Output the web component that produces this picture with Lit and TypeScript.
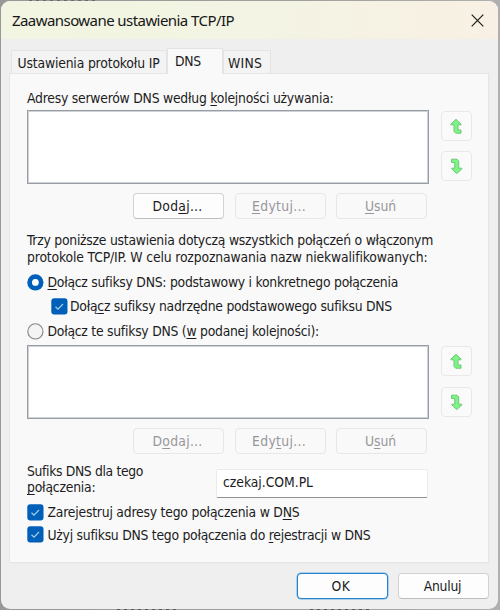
import { LitElement, html, css, svg } from "lit";
import { customElement, property, state, query } from "lit/decorators.js";
import { styleMap } from "lit/directives/style-map.js";

/* A single line of text tracked to a given width. "_" precedes the access key. */
@customElement("fit-label")
export class FitLabel extends LitElement {
  static styles = css`
    :host { display: block; white-space: pre; flex: none; }
    .text { display: inline-block; }
    .key { text-decoration: underline; text-decoration-thickness: 1px; text-underline-offset: 2px; text-decoration-skip-ink: none; }
  `;
  @property() text = "";
  @property({ type: Number }) width = 0;
  @state() private spacing = 0;
  @query(".text") private span!: HTMLElement;

  firstUpdated() {
    const chars = this.text.replace("_", "").length;
    this.spacing = (this.width - this.span.getBoundingClientRect().width) / chars;
  }

  render() {
    const i = this.text.indexOf("_");
    const body = i < 0
      ? this.text
      : html`${this.text.slice(0, i)}<span class="key">${this.text[i + 1]}</span>${this.text.slice(i + 2)}`;
    return html`<span class="text" style=${styleMap({ letterSpacing: `${this.spacing}px` })}>${body}</span>`;
  }
}

@customElement("push-button")
export class PushButton extends LitElement {
  static styles = css`
    :host { display: block; flex: none; }
    .button { box-sizing: border-box; width: 91px; height: 26px; display: flex; justify-content: center; padding: 4px 2px 0 0;
      border: 1px solid #d2d2d2; border-bottom-color: #bdbdbd; border-radius: 4px; background: #fdfdfd; color: #1c1c22; }
    .disabled { border-color: #e7e7e7; background: #f9f9f9; color: #97979b; }
    .primary { border: 1px solid #2583ce; box-shadow: 0 0 0 .5px #73b2e4; }
  `;
  @property() text = "";
  @property({ type: Number }) width = 0;
  @property() kind = "";
  render() {
    return html`<div class="button ${this.kind}"><fit-label text=${this.text} width=${this.width}></fit-label></div>`;
  }
}

@customElement("choice-mark")
export class ChoiceMark extends LitElement {
  static styles = css`
    :host { display: block; width: 17px; height: 17px; flex: none; }
    .mark { display: block; }
  `;
  @property() kind = "check";
  render() {
    const shape =
      this.kind === "check"
        ? svg`<rect x=".3" y=".3" width="16.2" height="16.2" rx="3" fill="#005fb8"/><path d="M4.5 8.7 7 11.1 12 6" fill="none" stroke="#a9cdec" stroke-width="1.2"/>`
        : this.kind === "on"
        ? svg`<circle cx="8.4" cy="8.4" r="8.1" fill="#005fb8"/><circle cx="8.4" cy="8.4" r="3.4" fill="#fff"/>`
        : svg`<circle cx="8.4" cy="8.4" r="7.6" fill="#f4f4f4" stroke="#858585" stroke-width="1.1"/>`;
    return html`<svg class="mark" width="17" height="17" viewBox="0 0 17 17">${shape}</svg>`;
  }
}

@customElement("server-list")
export class ServerList extends LitElement {
  static styles = css`
    :host { display: flex; gap: 12px; height: 74px; }
    .list { box-sizing: border-box; width: 402px; height: 74px; background: #fff; border: 1px solid #989ca3; box-shadow: inset 0 0 0 1px #cfd2d6; }
    .arrows { display: flex; flex-direction: column; gap: 10px; padding-top: 1px; }
    .spread { gap: 11px; }
    .arrow { box-sizing: border-box; width: 31px; height: 30px; border: 1px solid #e8e8e8; border-radius: 4px; background: #fafafa; display: block; }
    .green { fill: #7df486; stroke: #70c776; stroke-width: 1; }
  `;
  @property({ type: Boolean }) spread = false;
  render() {
    return html`<div class="list"></div>
      <div class="arrows ${this.spread ? "spread" : ""}">
        <svg class="arrow" viewBox="0 0 29 28"><path class="green" d="M14 7.3 8.9 12V12.8H12V19.5L13.7 21.2H19V18H16V12.8H19V12Z"/></svg>
        <svg class="arrow" viewBox="0 0 29 28"><path class="green" d="M9.5 7.2H15L16.7 8.9V16.2H19.8V17L14.8 21.6 9.8 17V16.2H12.8V10.5H9.5Z"/></svg>
      </div>`;
  }
}

@customElement("app-root")
export class AppRoot extends LitElement {
  static styles = css`
    :host { display: block; box-sizing: border-box; width: 500px; height: 610px; overflow: hidden; padding: 1px 2px 1px 1px;
      background:
        repeating-linear-gradient(90deg, #6a6a6a 0 3px, #999 3px 7px) 29px 0 / 66px 1px no-repeat,
        repeating-linear-gradient(90deg, #585858 0 3px, #999 3px 7px) 117px 609px / 60px 1px no-repeat,
        repeating-linear-gradient(90deg, #585858 0 3px, #999 3px 7px) 310px 609px / 60px 1px no-repeat,
        linear-gradient(90deg, #989898, #a0a0a0 60%, #b0b0b0);
      font: 13.8px/16px "DejaVu Sans Condensed", "DejaVu Sans", sans-serif; font-stretch: condensed; color: #1c1c22; }
    .window { height: 608px; width: 497px; overflow: hidden; border-radius: 9px; background: #efefef; }
    .title { height: 38px; display: flex; justify-content: space-between; box-sizing: border-box; padding: 8px 14px 0 11px;
      background: linear-gradient(90deg, #f2f5e2, #f3f4e3 50%, #f8f0e4); font: 15px/22px "Noto Sans", "Open Sans", sans-serif; color: #171717; }
    .close { width: 13px; height: 13px; margin-top: 4.5px; }
    .tabs { display: flex; align-items: flex-end; height: 25px; margin: 9px 0 0 10px; }
    .tab { box-sizing: border-box; height: 23px; border: 1px solid #e4e4e4; border-bottom: 0; background: #f3f3f3; padding: 4px 0 0 5.5px; }
    .ip { width: 156px; }
    .dns { width: 56px; height: 26px; margin-bottom: -1px; background: #f9f9f9; padding: 4px 0 0 7px; position: relative; }
    .wins { width: 48px; padding-left: 4px; }
    .panel { box-sizing: border-box; width: 480px; height: 490px; margin: 0 0 0 8px; border: 1px solid #e6e6e6; background: #f9f9f9; padding: 16px 0 0 17px; box-shadow: 1px 1px 0 #ececec; }
    .servers { margin-top: 4px; }
    .buttons { display: flex; gap: 10.5px; padding-left: 106px; margin-top: 9px; }
    .intro { margin-top: 13px; display: grid; row-gap: 0.5px; }
    .choice { display: flex; align-items: center; gap: 3.5px; height: 17px; }
    .first { margin-top: 9px; }
    .nested { margin: 7px 0 0 24px; gap: 2px; }
    .second { margin-top: 8px; }
    .servers2 { margin-top: 5px; }
    .suffix { display: flex; justify-content: space-between; margin-top: 9px; width: 401px; }
    .field { box-sizing: border-box; width: 212px; height: 29px; margin-top: 6px; background: #fff; border: 1px solid #ebebeb; border-bottom: 1.5px solid #929292; border-radius: 2px; padding: 4px 0 0 6px; }
    .register { margin-top: 6px; }
    .use { margin-top: 5.5px; }
    .footer { display: flex; justify-content: flex-end; gap: 10.5px; padding: 10px 9px 0 0; }
  `;
  render() {
    const text = (t: string, w: number) => html`<fit-label text=${t} width=${w}></fit-label>`;
    const button = (t: string, w: number, kind = "") => html`<push-button text=${t} width=${w} kind=${kind}></push-button>`;
    const choice = (place: string, kind: string, t: string, w: number) =>
      html`<div class="choice ${place}"><choice-mark kind=${kind}></choice-mark>${text(t, w)}</div>`;
    return html`<div class="window">
      <div class="title">
        ${text("Zaawansowane ustawienia TCP/IP", 222)}
        <svg class="close" viewBox="0 0 13 13"><path d="M.7.7 12.3 12.3M12.3.7.7 12.3" stroke="#1c1c1c" stroke-width="1.2" fill="none"/></svg>
      </div>
      <div class="tabs">
        <div class="tab ip">${text("Ustawienia protokołu IP", 142)}</div>
        <div class="tab dns">${text("DNS", 26)}</div>
        <div class="tab wins">${text("WINS", 34)}</div>
      </div>
      <div class="panel">
        ${text("Adresy serwerów DNS według _kolejności używania:", 306.5)}
        <server-list class="servers"></server-list>
        <div class="buttons">${button("Dod_aj...", 50)}${button("_Edytuj...", 54, "disabled")}${button("_Usuń", 31, "disabled")}</div>
        <div class="intro">
          ${text("Trzy poniższe ustawienia dotyczą wszystkich połączeń o włączonym", 406)}
          ${text("protokole TCP/IP. W celu rozpoznawania nazw niekwalifikowanych:", 400.5)}
        </div>
        ${choice("first", "on", "_Dołącz sufiksy DNS: podstawowy i konkretnego połączenia", 350.5)}
        ${choice("nested", "check", "Dołą_cz sufiksy nadrzędne podstawowego sufiksu DNS", 322)}
        ${choice("second", "off", "Dołącz te sufiksy DNS (_w podanej kolejności):", 271.5)}
        <server-list class="servers2" spread></server-list>
        <div class="buttons">${button("D_odaj...", 50, "disabled")}${button("Edy_tuj...", 54, "disabled")}${button("U_suń", 31, "disabled")}</div>
        <div class="suffix">
          <div>${text("Sufiks DNS dla tego", 116)}${text("_połączenia:", 68.5)}</div>
          <div class="field">${text("czekaj.COM.PL", 90)}</div>
        </div>
        ${choice("register", "check", "Zarejestruj adresy tego połączenia w D_NS", 252)}
        ${choice("use", "check", "Użyj sufiksu DNS tego połączenia do _rejestracji w DNS", 323)}
      </div>
      <div class="footer">${button("OK", 19, "primary")}${button("Anuluj", 37.5)}</div>
    </div>`;
  }
}
